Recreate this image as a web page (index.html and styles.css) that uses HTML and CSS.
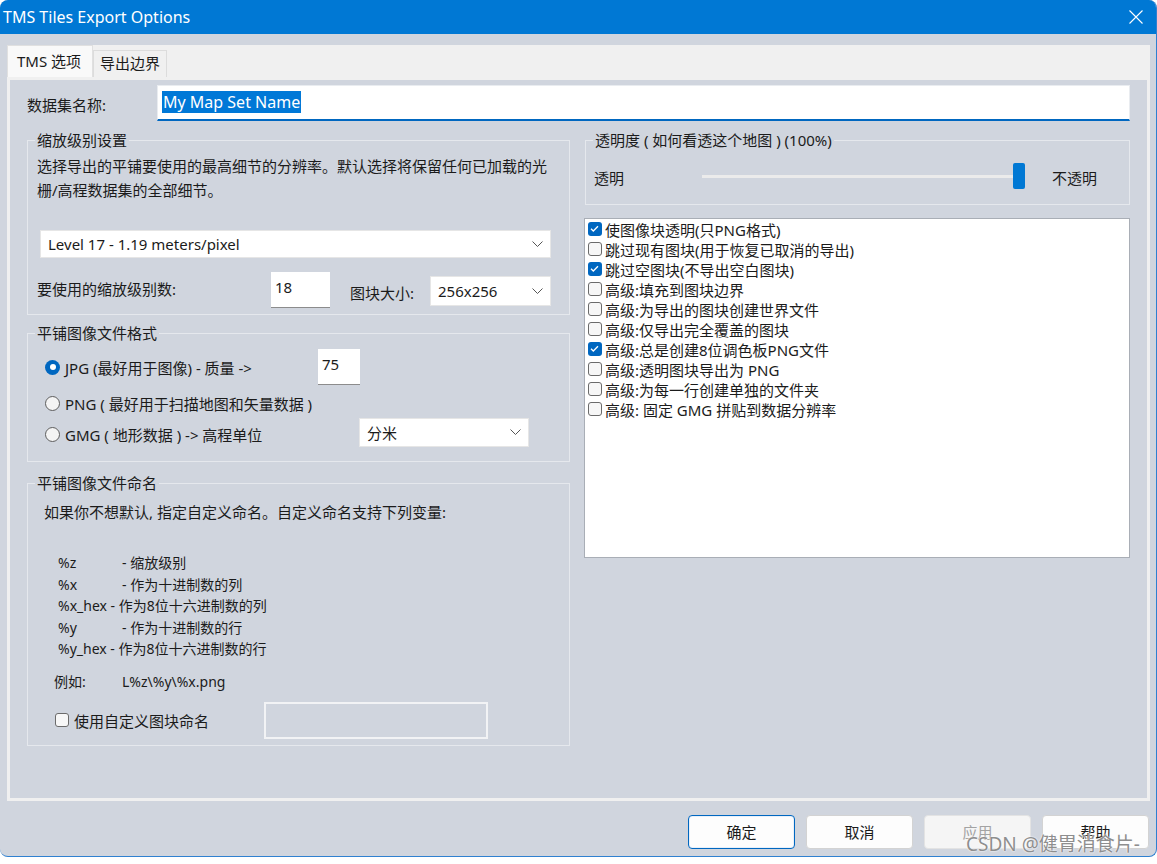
FILE: index.html
```html
<!doctype html>
<html lang="zh-CN">
<head>
	<meta charset="utf-8">
	<title>TMS Tiles Export Options</title>
	<link rel="stylesheet" href="styles.css">
</head>
<body>
<div class="window">
	<div class="titlebar">
		<span class="title">TMS Tiles Export Options</span>
		<span class="close">
			<svg width="14" height="14" viewBox="0 0 14 14"><path d="M0.5 0.5 L13.5 13.5 M13.5 0.5 L0.5 13.5" stroke="#fff" stroke-width="1.1" fill="none"/></svg>
		</span>
	</div>

	<div class="dialog">
		<div class="tabs">
			<div class="tab-strip">
				<div class="tab active">TMS 选项</div>
				<div class="tab">导出边界</div>
			</div>

			<div class="tab-page">
				<div class="name-row">
					<span class="name-label">数据集名称:</span>
					<div class="name-input"><span class="sel">My Map Set Name</span></div>
				</div>

				<div class="cols">
					<!-- left column -->
					<div class="col-left">
						<div class="group g-zoom">
							<span class="group-title">缩放级别设置</span>
							<p class="desc">选择导出的平铺要使用的最高细节的分辨率。默认选择将保留任何已加载的光<br>栅/高程数据集的全部细节。</p>
							<div class="select level">
								<span>Level 17 - 1.19 meters/pixel</span>
								<svg width="11" height="6" viewBox="0 0 11 6"><polyline points="0.5,0.5 5.5,5.5 10.5,0.5" stroke="#555" fill="none"/></svg>
							</div>
							<div class="levels-row">
								<span class="lvl-label">要使用的缩放级别数:</span>
								<div class="num-input n18">18</div>
								<span class="tile-label">图块大小:</span>
								<div class="select tile">
									<span>256x256</span>
									<svg width="11" height="6" viewBox="0 0 11 6"><polyline points="0.5,0.5 5.5,5.5 10.5,0.5" stroke="#555" fill="none"/></svg>
								</div>
							</div>
						</div>

						<div class="group g-format">
							<span class="group-title">平铺图像文件格式</span>
							<div class="radio-row r1">
								<span class="radio on"></span>
								<span class="lbl lbl-jpg">JPG (最好用于图像) - 质量 -&gt;</span>
								<div class="num-input q">75</div>
							</div>
							<div class="radio-row r2">
								<span class="radio"></span>
								<span class="lbl">PNG ( 最好用于扫描地图和矢量数据 )</span>
							</div>
							<div class="radio-row r3">
								<span class="radio"></span>
								<span class="lbl lbl-gmg">GMG ( 地形数据 ) -&gt; 高程单位</span>
								<div class="select unit">
									<span>分米</span>
									<svg width="11" height="6" viewBox="0 0 11 6"><polyline points="0.5,0.5 5.5,5.5 10.5,0.5" stroke="#555" fill="none"/></svg>
								</div>
							</div>
						</div>

						<div class="group g-naming">
							<span class="group-title">平铺图像文件命名</span>
							<p class="naming-desc">如果你不想默认, 指定自定义命名。自定义命名支持下列变量:</p>
							<div class="vars">
								<div><span class="var">%z</span>- 缩放级别</div>
								<div><span class="var">%x</span>- 作为十进制数的列</div>
								<div>%x_hex - 作为8位十六进制数的列</div>
								<div><span class="var">%y</span>- 作为十进制数的行</div>
								<div>%y_hex - 作为8位十六进制数的行</div>
							</div>
							<div class="example"><span class="ex-key">例如:</span>L%z\%y\%x.png</div>
							<div class="custom-row">
								<span class="cb"></span>
								<span class="custom-label">使用自定义图块命名</span>
								<div class="custom-box"></div>
							</div>
						</div>
					</div>

					<!-- right column -->
					<div class="col-right">
						<div class="group g-trans">
							<span class="group-title">透明度 ( 如何看透这个地图 ) (100%)</span>
							<div class="slider-row">
								<span class="t-label">透明</span>
								<div class="slider">
									<div class="track"></div>
									<div class="thumb"></div>
								</div>
								<span class="o-label">不透明</span>
							</div>
						</div>

						<div class="options">
							<div class="item"><span class="cb on"><svg width="13" height="13" viewBox="0 0 13 13"><path d="M3 6.8 L5.3 9 L10 4.2" stroke="#fff" stroke-width="1.3" fill="none"/></svg></span>使图像块透明(只PNG格式)</div>
							<div class="item"><span class="cb"></span>跳过现有图块(用于恢复已取消的导出)</div>
							<div class="item"><span class="cb on"><svg width="13" height="13" viewBox="0 0 13 13"><path d="M3 6.8 L5.3 9 L10 4.2" stroke="#fff" stroke-width="1.3" fill="none"/></svg></span>跳过空图块(不导出空白图块)</div>
							<div class="item"><span class="cb"></span>高级:填充到图块边界</div>
							<div class="item"><span class="cb"></span>高级:为导出的图块创建世界文件</div>
							<div class="item"><span class="cb"></span>高级:仅导出完全覆盖的图块</div>
							<div class="item"><span class="cb on"><svg width="13" height="13" viewBox="0 0 13 13"><path d="M3 6.8 L5.3 9 L10 4.2" stroke="#fff" stroke-width="1.3" fill="none"/></svg></span>高级:总是创建8位调色板PNG文件</div>
							<div class="item"><span class="cb"></span>高级:透明图块导出为 PNG</div>
							<div class="item"><span class="cb"></span>高级:为每一行创建单独的文件夹</div>
							<div class="item"><span class="cb"></span>高级: 固定 GMG 拼贴到数据分辨率</div>
						</div>
					</div>
				</div>
			</div>
		</div>

		<div class="buttons">
			<div class="btn primary">确定</div>
			<div class="btn">取消</div>
			<div class="btn disabled">应用</div>
			<div class="btn">帮助</div>
		</div>
	</div>

	<div class="watermark">CSDN @健胃消食片-</div>
</div>
</body>
</html>
```

FILE: styles.css
```css
*{
	box-sizing: border-box;
}
html,body{
	margin: 0;
	padding: 0;
	background: #fff;
	font-family: "Segoe UI", "Noto Sans", "Noto Sans CJK SC", sans-serif;
	font-size: 15px;
	color: #1b1b1b;
}
.window{
	position: relative;
	width: 1157px;
	height: 857px;
	background: #d0d5de;
	border-right: 1px solid #2f80d0;
	border-bottom: 1px solid #2f80d0;
	border-radius: 8px 8px 8px 8px;
	overflow: hidden;
}
	.titlebar{
		display: flex;
		align-items: center;
		height: 34px;
		background: #0078d4;
		color: #fff;
		padding-left: 3px;
		font-size: 16px;
	}
	.close{
		margin-left: auto;
		margin-right: 13px;
		display: flex;
	}
	.dialog{
		padding: 11px 7px 0 7px;
	}

	/* tab control */
	.tabs{
		width: 1143px;
	}
	.tab-strip{
		display: flex;
		align-items: flex-end;
		height: 32px;
		background: #f0f0f0;
	}
	.tab{
		height: 27px;
		line-height: 25px;
		padding: 0 6px;
		border: 1px solid #dcdcdc;
		border-bottom: none;
		background: #f0f0f0;
	}
	.tab.active{
		height: 32px;
		line-height: 30px;
		width: 86px;
		padding-left: 9px;
		background: #f9f9f9;
		border-color: #e0e0e0;
	}
	.tab-page{
		height: 724px;
		border: 3px solid #f0f0f0;
		background: #d0d5de;
		padding: 5px 17px 0 17px;
	}

	.name-row{
		display: flex;
		align-items: center;
		height: 36px;
	}
	.name-label{
		width: 130px;
		padding-top: 2px;
	}
	.name-input{
		flex: 1;
		height: 36px;
		background: #fff;
		border: 1px solid #e9ecf0;
		border-bottom: 2px solid #0067c0;
		padding: 5px 0 0 4px;
	}
	.sel{
		background: #0078d7;
		color: #fff;
		font-size: 16px;
		line-height: 22px;
		display: inline-block;
		padding: 0 1px;
	}

	.cols{
		display: flex;
		gap: 15px;
		margin-top: 19px;
	}
	.col-left{
		width: 543px;
	}
	.col-right{
		width: 545px;
	}

	/* group boxes */
	.group{
		border: 1px solid #e5e8ed;
	}
	.group-title{
		display: block;
		width: max-content;
		margin: -11px 0 0 7px;
		padding: 0 2px;
		line-height: 20px;
		background: #d0d5de;
	}

	.g-zoom{
		height: 175px;
	}
	.desc{
		margin: 4px 0 0 9px;
		line-height: 24px;
	}
	.select{
		display: flex;
		align-items: center;
		justify-content: space-between;
		background: #fff;
		border: 1px solid #e6e6e6;
		padding: 0 7px 0 7px;
	}
	.select.level{
		margin: 28px 0 0 12px;
		width: 511px;
		height: 28px;
	}
	.levels-row{
		display: flex;
		align-items: center;
		margin: 14px 0 0 9px;
		height: 36px;
	}
	.lvl-label{
		width: 234px;
		margin-top: -3px;
	}
	.num-input{
		background: #fff;
		border-bottom: 1px solid #8c8c8c;
		line-height: 22px;
		padding: 4px 0 0 4px;
		height: 36px;
	}
	.n18{
		width: 59px;
	}
	.tile-label{
		margin-left: 20px;
		width: 80px;
		padding-top: 4px;
	}
	.select.tile{
		width: 121px;
		height: 30px;
		margin-top: 2px;
	}

	.g-format{
		margin-top: 18px;
		height: 129px;
	}
	.radio-row{
		display: flex;
		align-items: center;
		margin-left: 17px;
		height: 30px;
	}
	.radio-row.r1{
		margin-top: 6px;
		height: 36px;
	}
	.radio-row.r2{
		margin-top: 3px;
	}
	.radio-row.r3{
		margin-top: 1px;
	}
	.radio{
		width: 15px;
		height: 15px;
		border-radius: 50%;
		border: 1px solid #5d5d5d;
		background: #f4f4f4;
		position: relative;
	}
	.radio.on{
		border: none;
		background: #0067c0;
	}
	.radio.on::after{
		content: "";
		position: absolute;
		left: 4.5px;
		top: 4.5px;
		width: 6px;
		height: 6px;
		border-radius: 50%;
		background: #fff;
	}
	.lbl{
		margin-left: 5px;
	}
	.lbl-jpg{
		width: 253px;
	}
	.lbl-gmg{
		width: 294px;
	}
	.num-input.q{
		width: 42px;
	}
	.select.unit{
		width: 170px;
		height: 29px;
		margin-top: -4px;
	}

	.g-naming{
		margin-top: 21px;
		height: 263px;
	}
	.naming-desc{
		margin: 8px 0 0 16px;
		line-height: 22px;
	}
	.vars{
		margin: 29px 0 0 30px;
		line-height: 21.5px;
		font-size: 14px;
	}
	.var{
		display: inline-block;
		width: 64px;
	}
	.example{
		margin: 11px 0 0 26px;
		line-height: 22px;
		font-size: 14px;
	}
	.ex-key{
		display: inline-block;
		width: 68px;
	}
	.custom-row{
		display: flex;
		align-items: center;
		margin: 9px 0 0 27px;
		height: 37px;
	}
	.custom-label{
		margin-left: 5px;
		width: 190px;
	}
	.custom-box{
		width: 224px;
		height: 37px;
		border: 2px solid #f2f3f5;
	}

	/* check boxes */
	.cb{
		display: inline-flex;
		width: 14px;
		height: 14px;
		border: 1px solid #6b6b6b;
		border-radius: 3px;
		background: #f7f7f7;
		flex-shrink: 0;
	}
	.cb.on{
		border: none;
		background: #0067c0;
	}

	/* transparency */
	.g-trans{
		height: 65px;
	}
	.slider-row{
		display: flex;
		align-items: center;
		height: 30px;
		margin-top: 11px;
		padding-left: 8px;
	}
	.t-label{
		width: 108px;
		padding-top: 3px;
	}
	.slider{
		display: flex;
		align-items: center;
		width: 323px;
		height: 26px;
	}
	.track{
		flex: 1;
		height: 3px;
		background: #ebebeb;
	}
	.thumb{
		width: 12px;
		height: 26px;
		background: #0078d4;
		border-radius: 2px;
	}
	.o-label{
		margin-left: 27px;
		padding-top: 3px;
	}

	.options{
		margin: 13px 0 0 -1px;
		width: 546px;
		height: 340px;
		background: #fff;
		border: 1px solid #a9aeb6;
		padding-left: 3px;
	}
	.item{
		display: flex;
		align-items: center;
		height: 20px;
		gap: 3px;
	}

	/* bottom buttons */
	.buttons{
		display: flex;
		justify-content: flex-end;
		gap: 11px;
		margin-top: 14px;
	}
	.btn{
		width: 107px;
		height: 34px;
		line-height: 32px;
		text-align: center;
		background: #fdfdfd;
		border: 1px solid #d3d3d3;
		border-radius: 4px;
	}
	.btn.primary{
		border: 1px solid #0067c0;
		box-shadow: inset 0 0 0 1px #e8f0fa;
	}
	.btn.disabled{
		background: #f5f5f5;
		color: #a3a3a3;
		border-color: #e3e3e3;
	}

	.watermark{
		position: absolute;
		left: 966px;
		top: 832px;
		font-size: 19px;
		line-height: 24px;
		color: #8e8e8e;
		text-shadow: 0 0 2px #fff, 0 0 1px #fff;
		white-space: nowrap;
	}
```
